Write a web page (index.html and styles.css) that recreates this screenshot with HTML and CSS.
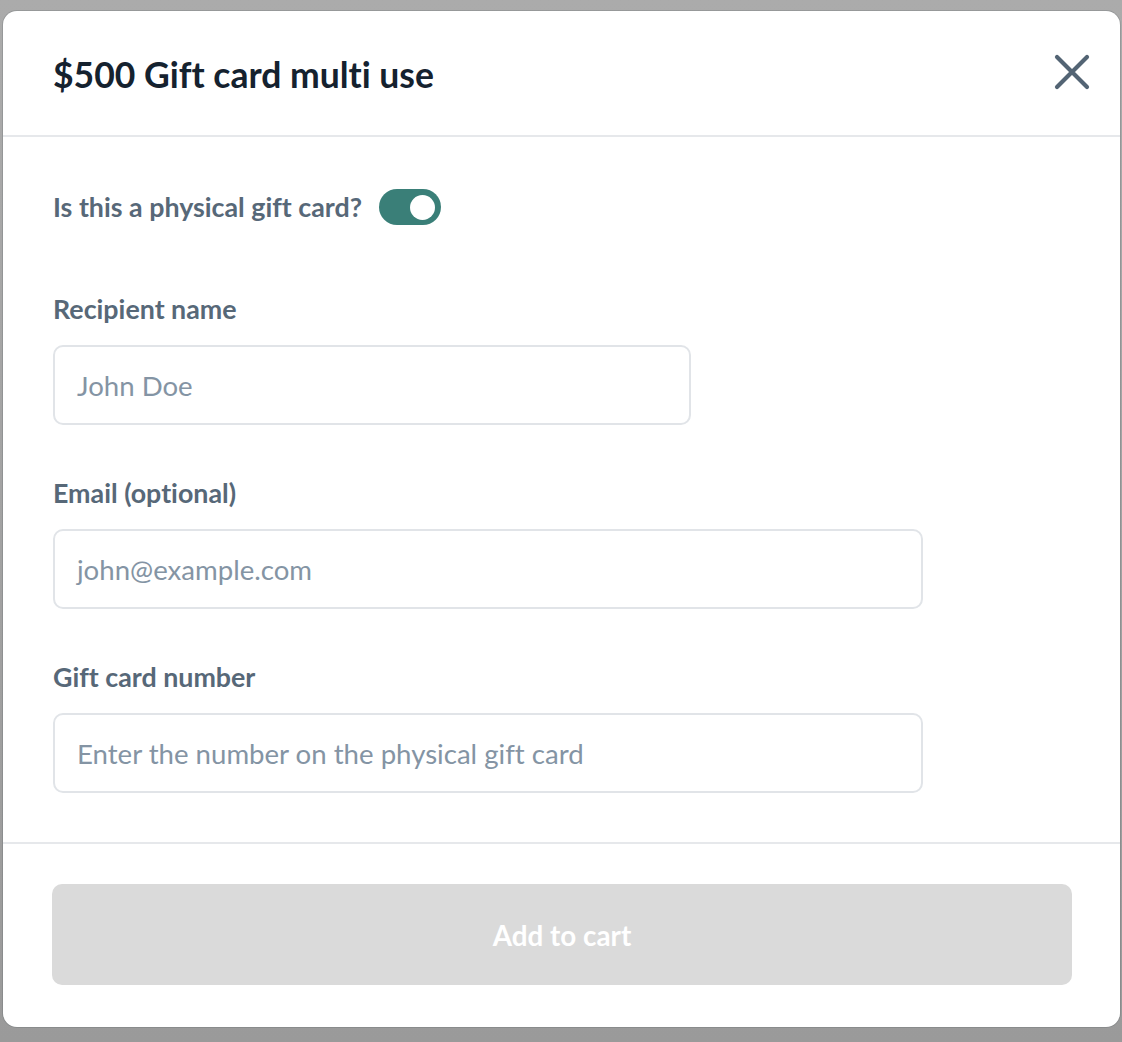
FILE: index.html
```html
<!DOCTYPE html>
<html lang="en">
<head>
<meta charset="utf-8">
<title>$500 Gift card multi use</title>
<link rel="stylesheet" href="styles.css">
</head>
<body>
<div class="modal">
  <div class="modal-header">
    <h1 class="title">$500 Gift card multi use</h1>
    <button class="close" aria-label="Close">
      <svg width="36" height="36" viewBox="0 0 36 36"><path d="M3 3 L33 33 M33 3 L3 33" stroke="#536474" stroke-width="4.2" stroke-linecap="round" fill="none"/></svg>
    </button>
  </div>
  <div class="modal-body">
    <div class="toggle-row">
      <span class="toggle-label">Is this a physical gift card?</span>
      <span class="toggle"><span class="knob"></span></span>
    </div>
    <div class="field">
      <label class="label">Recipient name</label>
      <div class="input input-short">John Doe</div>
    </div>
    <div class="field">
      <label class="label">Email (optional)</label>
      <div class="input input-long">john@example.com</div>
    </div>
    <div class="field">
      <label class="label">Gift card number</label>
      <div class="input input-long">Enter the number on the physical gift card</div>
    </div>
  </div>
  <div class="modal-footer">
    <button class="add-btn">Add to cart</button>
  </div>
</div>
</body>
</html>
```
FILE: styles.css
```css
html, body {
  margin: 0;
  padding: 0;
}
body {
  background: linear-gradient(#ababab, #9a9a9a);
  height: 1042px;
  overflow: hidden;
  font-family: Lato, "Noto Sans", sans-serif;
  font-variant-ligatures: none;
  padding-top: 11px;
  padding-left: 3px;
  box-sizing: border-box;
}
.modal {
  width: 1117px;
  height: 1016px;
  background: #fff;
  border-radius: 14px;
  box-shadow: 0 0 0 1px rgba(60, 70, 80, 0.18);
  display: flex;
  flex-direction: column;
  box-sizing: border-box;
}
.modal-header {
  height: 126px;
  border-bottom: 2px solid #e6e8eb;
  display: flex;
  align-items: center;
  justify-content: space-between;
  padding: 0 30px 0 50px;
  box-sizing: border-box;
  flex-shrink: 0;
}
.title {
  margin: 3px 0 0;
  font-size: 35.5px;
  line-height: 42px;
  font-weight: 700;
  color: #15222f;
  font-variant-ligatures: none;
}
.close {
  border: 0;
  background: none;
  padding: 0;
  width: 36px;
  height: 36px;
  margin-top: -2px;
  cursor: pointer;
}
.close svg { display: block; }
.modal-body {
  padding: 52px 50px 47px;
  display: flex;
  flex-direction: column;
  gap: 54px;
  flex: 1;
}
.toggle-row {
  display: flex;
  align-items: center;
  gap: 17px;
  height: 36px;
  margin-bottom: 16px;
}
.toggle-label, .label {
  font-size: 26.8px;
  font-weight: 700;
  color: #576878;
}
.toggle {
  width: 62px;
  height: 36px;
  border-radius: 18px;
  background: #3a7f78;
  display: flex;
  align-items: center;
  justify-content: flex-end;
  padding-right: 6px;
  box-sizing: border-box;
}
.knob {
  width: 25px;
  height: 25px;
  border-radius: 50%;
  background: #fff;
}
.field {
  display: flex;
  flex-direction: column;
  gap: 22px;
}
.label {
  line-height: 28px;
  display: block;
}
.input {
  height: 80px;
  border: 2px solid #e1e4e8;
  border-radius: 10px;
  box-sizing: border-box;
  padding: 0 22px;
  display: flex;
  align-items: center;
  font-size: 27.6px;
  color: #8494a4;
}
.input-short { width: 638px; }
.input-long { width: 870px; }
.modal-footer {
  border-top: 2px solid #e6e8eb;
  padding: 40px 0 42px 49px;
  flex-shrink: 0;
}
.add-btn {
  width: 1020px;
  height: 101px;
  border: 0;
  border-radius: 10px;
  background: #dadada;
  color: #fff;
  font-family: Lato, "Noto Sans", sans-serif;
  font-variant-ligatures: none;
  font-size: 27.8px;
  font-weight: 700;
  display: block;
  padding-top: 2px;
}
```
